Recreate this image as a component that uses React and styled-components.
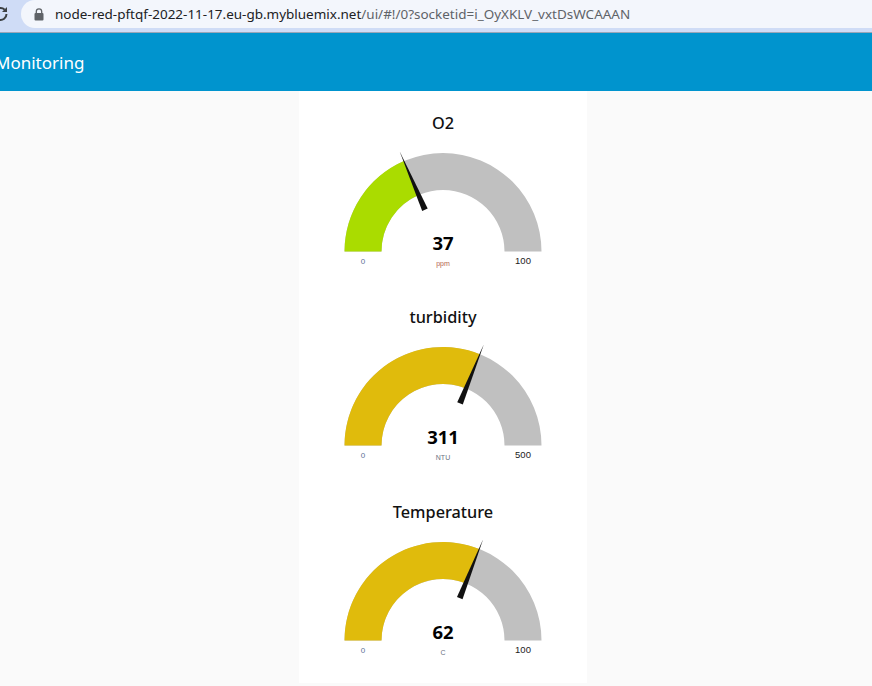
import React from "react";
import styled, { createGlobalStyle } from "styled-components";

const GlobalStyle = createGlobalStyle`
  html, body {
    margin: 0;
    padding: 0;
    height: 100%;
    overflow: hidden;
    background: #fafafa;
  }
`

const Page = styled.div`
  width: 872px;
  height: 686px;
  display: flex;
  flex-direction: column;
  overflow: hidden;
`

const BrowserBar = styled.div`
  height: 32px;
  flex: none;
  display: flex;
  align-items: flex-start;
  background: #cfdcf6;
  border-bottom: 1px solid #9aa6b8;
  box-sizing: content-box;
`

const ReloadSlot = styled.div`
  width: 21px;
  height: 28px;
  flex: none;
  display: flex;
  align-items: center;
`

const UrlPill = styled.div`
  width: 851px;
  height: 28px;
  display: flex;
  align-items: center;
  gap: 11px;
  padding-left: 13px;
  box-sizing: border-box;
  background: #f3f6fc;
  border-radius: 14px 0 0 14px;
  font-family: "Noto Sans", sans-serif;
  font-size: 13.48px;
  color: #5f6368;
  white-space: nowrap;
`

const Host = styled.span`
  color: #202124;
`

const Header = styled.div`
  height: 58px;
  flex: none;
  display: flex;
  align-items: center;
  background: #0094ce;
  color: #fff;
  font-family: "Noto Sans", sans-serif;
  font-size: 17px;
  box-sizing: border-box;
`

const HeaderTitle = styled.span`
  margin-left: -5px;
`

const Main = styled.div`
  flex: 1;
  padding-left: 299px;
`

const Panel = styled.div`
  width: 288px;
  height: 592px;
  background: #fff;
  display: flex;
  flex-direction: column;
  padding-top: 19.5px;
  box-sizing: border-box;
`

const Card = styled.div`
  height: 194.5px;
  flex: none;
  display: flex;
  flex-direction: column;
  align-items: center;
`

const Title = styled.div`
  height: 24px;
  line-height: 24px;
  font-family: "Noto Sans", sans-serif;
  font-size: 16.3px;
  font-weight: 500;
  color: #111;
`

const Dial = styled.svg`
  display: block;
  width: 288px;
  height: 130px;
  margin-top: 5px;
`

const CX = 144;
const CY = 111.5;
const OUTER = 98.5;
const INNER = 61.5;

const point = (radius, angle) => [
  CX - radius * Math.cos(angle),
  CY - radius * Math.sin(angle),
];

const arcPath = (from, to) => {
  const [x1, y1] = point(OUTER, from);
  const [x2, y2] = point(OUTER, to);
  const [x3, y3] = point(INNER, to);
  const [x4, y4] = point(INNER, from);
  return `M${x1} ${y1}A${OUTER} ${OUTER} 0 0 1 ${x2} ${y2}L${x3} ${y3}A${INNER} ${INNER} 0 0 0 ${x4} ${y4}Z`;
};

const needlePath = (angle) => {
  const tip = point(109, angle);
  const side = [Math.sin(angle), -Math.cos(angle)];
  const base = point(45.5, angle);
  const a = [base[0] + side[0] * 3, base[1] + side[1] * 3];
  const b = [base[0] - side[0] * 3, base[1] - side[1] * 3];
  return `M${tip[0]} ${tip[1]}L${a[0]} ${a[1]}L${b[0]} ${b[1]}Z`;
};

const gauges = [
  { title: "O2", value: 37, max: 100, unit: "ppm", color: "#aadc00", unitColor: "#b5654f" },
  { title: "turbidity", value: 311, max: 500, unit: "NTU", color: "#e0bb0c", unitColor: "#6b7280" },
  { title: "Temperature", value: 62, max: 100, unit: "C", color: "#e0bb0c", unitColor: "#6b7280" },
];

const Gauge = ({ title, value, max, unit, color, unitColor }) => {
  const angle = (Math.PI * value) / max;
  return (
    <Card>
      <Title>{title}</Title>
      <Dial viewBox="0 0 288 130">
        <path d={arcPath(0, Math.PI)} fill="#c0c0c0" />
        <path d={arcPath(0, angle)} fill={color} />
        <path d={needlePath(angle)} fill="#111" />
        <text x={CX} y={CY - 2} textAnchor="middle" fontFamily="Noto Sans, sans-serif" fontWeight="700" fontSize="18.5" fill="#010101">{value}</text>
        <text x={CX} y={CY + 14.5} textAnchor="middle" fontFamily="Liberation Sans, sans-serif" fontSize="7" fill={unitColor}>{unit}</text>
        <text x={CX - 80} y={CY + 12.5} textAnchor="middle" fontFamily="Liberation Sans, sans-serif" fontSize="8" fill="#5c7196">0</text>
        <text x={CX + 80} y={CY + 12.5} textAnchor="middle" fontFamily="Liberation Sans, sans-serif" fontSize="9.5" fill="#222">{max}</text>
      </Dial>
    </Card>
  );
};

const App = () => (
  <Page>
    <GlobalStyle />
    <BrowserBar>
      <ReloadSlot>
        <svg width="8" height="16" viewBox="8 0 8 16">
          <path d="M14.5 8a6 6 0 1 1-1.8-4.3" fill="none" stroke="#3c4043" strokeWidth="2" />
          <path d="M15 1v5h-5z" fill="#3c4043" />
        </svg>
      </ReloadSlot>
      <UrlPill>
        <svg width="10" height="13" viewBox="0 0 10 13">
          <path d="M2.3 5V3.6a2.7 2.7 0 0 1 5.4 0V5" fill="none" stroke="#5f6368" strokeWidth="1.3" />
          <rect x="0.5" y="5" width="9" height="7.5" rx="1" fill="#5f6368" />
        </svg>
        <span><Host>node-red-pftqf-2022-11-17.eu-gb.mybluemix.net</Host>/ui/#!/0?socketid=i_OyXKLV_vxtDsWCAAAN</span>
      </UrlPill>
    </BrowserBar>
    <Header>
      <HeaderTitle>Monitoring</HeaderTitle>
    </Header>
    <Main>
      <Panel>
        {gauges.map((g) => <Gauge key={g.title} {...g} />)}
      </Panel>
    </Main>
  </Page>
);

export default App;
